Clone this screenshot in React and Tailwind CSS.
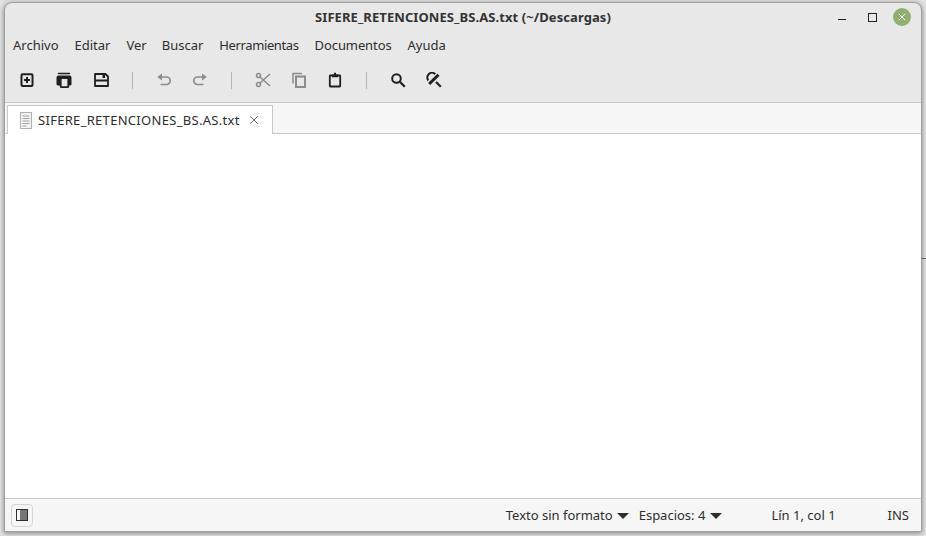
import { X } from "lucide-react";

const menus = [
  { label: "Archivo", cls: "" },
  { label: "Editar", cls: "" },
  { label: "Ver", cls: "" },
  { label: "Buscar", cls: "-ml-px" },
  { label: "Herramientas", cls: "tracking-[-0.38px]" },
  { label: "Documentos", cls: "tracking-[-0.1px]" },
  { label: "Ayuda", cls: "" },
];

const Glyph = ({ children, className = "text-[#1f1f1f]" }) => (
  <svg viewBox="0 0 16 16" className={`w-4 h-4 ${className}`} fill="none">
    {children}
  </svg>
);

const NewIcon = () => (
  <Glyph>
    <rect x="2.500" y="2.300" width="11" height="11.600" rx="1" stroke="currentColor" strokeWidth="2" />
    <path d="M8 5v6M5 8h6" stroke="currentColor" strokeWidth="2" />
  </Glyph>
);

const OpenIcon = () => (
  <Glyph>
    <path d="M2.500 1.600h11" stroke="currentColor" strokeWidth="1.500" strokeLinecap="round" />
    <path d="M0.500 5.500a2 2 0 0 1 2-2h11a2 2 0 0 1 2 2v6.500a1.500 1.500 0 0 1-1.500 1.500h-12a1.500 1.500 0 0 1-1.500-1.500z" fill="currentColor" />
    <rect x="4.700" y="6.200" width="7.600" height="9" rx="1" stroke="currentColor" strokeWidth="1.800" fill="#e8e8e8" />
  </Glyph>
);

const SaveIcon = () => (
  <Glyph>
    <path d="M2 2h10.500L15 4.500V14H2z" stroke="currentColor" strokeWidth="1.800" strokeLinejoin="round" />
    <path d="M2 8.500h13" stroke="currentColor" strokeWidth="1.800" />
    <rect x="9.500" y="2.500" width="2.500" height="3.500" fill="currentColor" />
  </Glyph>
);

const UndoIcon = () => (
  <Glyph className="text-[#8c8c8c]">
    <path d="M5 5h5.500a3.500 3.500 0 0 1 0 7.500H4.500" stroke="currentColor" strokeWidth="1.700" />
    <path d="M1.200 5 6 1.500v7z" fill="currentColor" />
  </Glyph>
);

const RedoIcon = () => (
  <Glyph className="text-[#8c8c8c]">
    <path d="M11 5H5.500a3.500 3.500 0 0 0 0 7.500h6" stroke="currentColor" strokeWidth="1.700" />
    <path d="M14.800 5 10 1.500v7z" fill="currentColor" />
  </Glyph>
);

const CutIcon = () => (
  <Glyph className="text-[#8c8c8c]">
    <circle cx="3.500" cy="3.500" r="2" stroke="currentColor" strokeWidth="1.500" />
    <circle cx="3.500" cy="12.500" r="2" stroke="currentColor" strokeWidth="1.500" />
    <path d="M5 5l10 9M5 11 15 2" stroke="currentColor" strokeWidth="1.500" />
  </Glyph>
);

const CopyIcon = () => (
  <Glyph className="text-[#8c8c8c]">
    <path d="M2 11.500V1.500h9" stroke="currentColor" strokeWidth="1.500" />
    <rect x="5" y="4.500" width="9" height="10.500" stroke="currentColor" strokeWidth="2" />
  </Glyph>
);

const PasteIcon = () => (
  <Glyph>
    <rect x="2.800" y="3.500" width="10.400" height="11" rx="0.500" stroke="currentColor" strokeWidth="1.800" />
    <path d="M5 2.500h2V0.800h2v1.700h2V5.200H5z" fill="currentColor" />
  </Glyph>
);

const SearchIcon = () => (
  <Glyph>
    <circle cx="6.500" cy="6.500" r="4.300" stroke="currentColor" strokeWidth="2" />
    <path d="M10 10l4.800 4.800" stroke="currentColor" strokeWidth="2.200" />
  </Glyph>
);

const ReplaceIcon = () => (
  <Glyph>
    <path d="M9.500 2.400A4.500 4.500 0 0 0 2.400 8.500" stroke="currentColor" strokeWidth="2" />
    <path d="M3.500 11.500 12.500 2.500" stroke="#e8e8e8" strokeWidth="5" />
    <path d="M3.200 12 12.500 2.700" stroke="currentColor" strokeWidth="3" />
    <path d="M10 10l4.800 4.800" stroke="currentColor" strokeWidth="2.200" />
  </Glyph>
);

const Sep = () => <div className="w-px h-[17px] bg-[#b4b4b4]" />;

const Caret = () => (
  <div className="w-0 h-0 border-x-[6px] border-x-transparent border-t-[6px] border-t-[#2e2e2e]" />
);

export default function App() {
  return (
    <div
      className="relative w-[926px] h-[536px] bg-[#e2e2e2] pt-[2px] pl-[4px] pr-[4px] pb-[4px] overflow-hidden text-[13px] text-[#2e2e2e]"
      style={{ fontFamily: '"Noto Sans", sans-serif' }}
    >
      {/* edge of the window behind */}
      <div className="absolute right-0 top-[258px] w-[5px] h-px bg-[#6e6e6e]" />

      <div className="relative h-full flex flex-col rounded-t-[8px] border border-[#a0a0a0] bg-[#e8e8e8] shadow-[0_1px_5px_rgba(0,0,0,0.45)] overflow-hidden">
        {/* Title bar */}
        <div className="relative h-[30px] shrink-0 flex items-center justify-center">
          <span className="font-bold text-[13px] text-[#333333] tracking-[0.08px]">SIFERE_RETENCIONES_BS.AS.txt (~/Descargas)</span>
          <div className="absolute right-[10px] top-[5px] flex items-center">
            <div className="w-[8px] h-px mt-[5px] bg-[#1f1f1f]" />
            <div className="w-[9px] h-[9px] ml-[22px] border border-[#1f1f1f]" />
            <div className="w-[18px] h-[18px] ml-[16px] rounded-full bg-[#8fb06f] flex items-center justify-center">
              <X size={12} strokeWidth={2} className="text-white" />
            </div>
          </div>
        </div>

        {/* Menu */}
        <div className="h-[25px] shrink-0 flex items-center gap-[16px] pl-[8px]">
          {menus.map((m) => (
            <span key={m.label} className={m.cls}>
              {m.label}
            </span>
          ))}
        </div>

        {/* Toolbar */}
        <div className="h-[45px] shrink-0 flex items-center pl-[14px] gap-[23px] border-b border-[#c8c8c8]">
          <div className="flex gap-[21px]">
            <NewIcon />
            <OpenIcon />
            <SaveIcon />
          </div>
          <Sep />
          <div className="flex gap-[20px]">
            <UndoIcon />
            <RedoIcon />
          </div>
          <Sep />
          <div className="flex gap-[20px]">
            <CutIcon />
            <CopyIcon />
            <PasteIcon />
          </div>
          <Sep />
          <div className="flex gap-[20px]">
            <SearchIcon />
            <ReplaceIcon />
          </div>
        </div>

        {/* Tabs */}
        <div className="h-[31px] shrink-0 flex pl-[2px] pt-[2px] bg-[#f6f6f6] border-b border-[#c8c8c8]">
          <div className="h-[29px] w-[266px] flex items-center pl-[12px] bg-white border-x border-t border-[#c8c8c8]">
            <svg viewBox="0 0 12 17" className="w-[12px] h-[17px] mr-[6px]">
              <rect x="0.500" y="0.500" width="11" height="16" fill="#f2f2f2" stroke="#b0b0b0" />
              <path d="M2.500 4h7M2.500 6.500h7M2.500 9h7M2.500 11.500h7M2.500 14h4" stroke="#a5a5a5" strokeWidth="1.200" />
            </svg>
            <span className="text-[#2e2e2e] tracking-[0.3px] pt-px">SIFERE_RETENCIONES_BS.AS.txt</span>
            <X size={14} strokeWidth={1.500} className="ml-[7px] text-[#555555]" />
          </div>
        </div>

        {/* Editor */}
        <div className="flex-1 bg-white" />

        {/* Status bar */}
        <div className="h-[33px] shrink-0 flex items-center bg-[#f6f6f6] border-t border-[#c8c8c8] pl-[6px] pr-[12px]">
          <div className="w-[22px] h-[23px] rounded-[4px] border border-[#d4d4d4] flex items-center justify-center">
            <svg viewBox="0 0 12 12" className="w-[12px] h-[12px]">
              <rect x="0.500" y="0.500" width="11" height="11" fill="#777777" stroke="#2e2e2e" />
              <rect x="1" y="1" width="3" height="10" fill="#f6f6f6" />
            </svg>
          </div>
          <div className="ml-auto flex items-center gap-[4px] pt-px">
            <span>Texto sin formato</span>
            <Caret />
          </div>
          <div className="ml-[10px] flex items-center gap-[5px] pt-px">
            <span>Espacios: 4</span>
            <Caret />
          </div>
          <span className="ml-[49px] pt-px">Lín 1, col 1</span>
          <span className="ml-[52px] pt-px">INS</span>
        </div>
      </div>
    </div>
  );
}
